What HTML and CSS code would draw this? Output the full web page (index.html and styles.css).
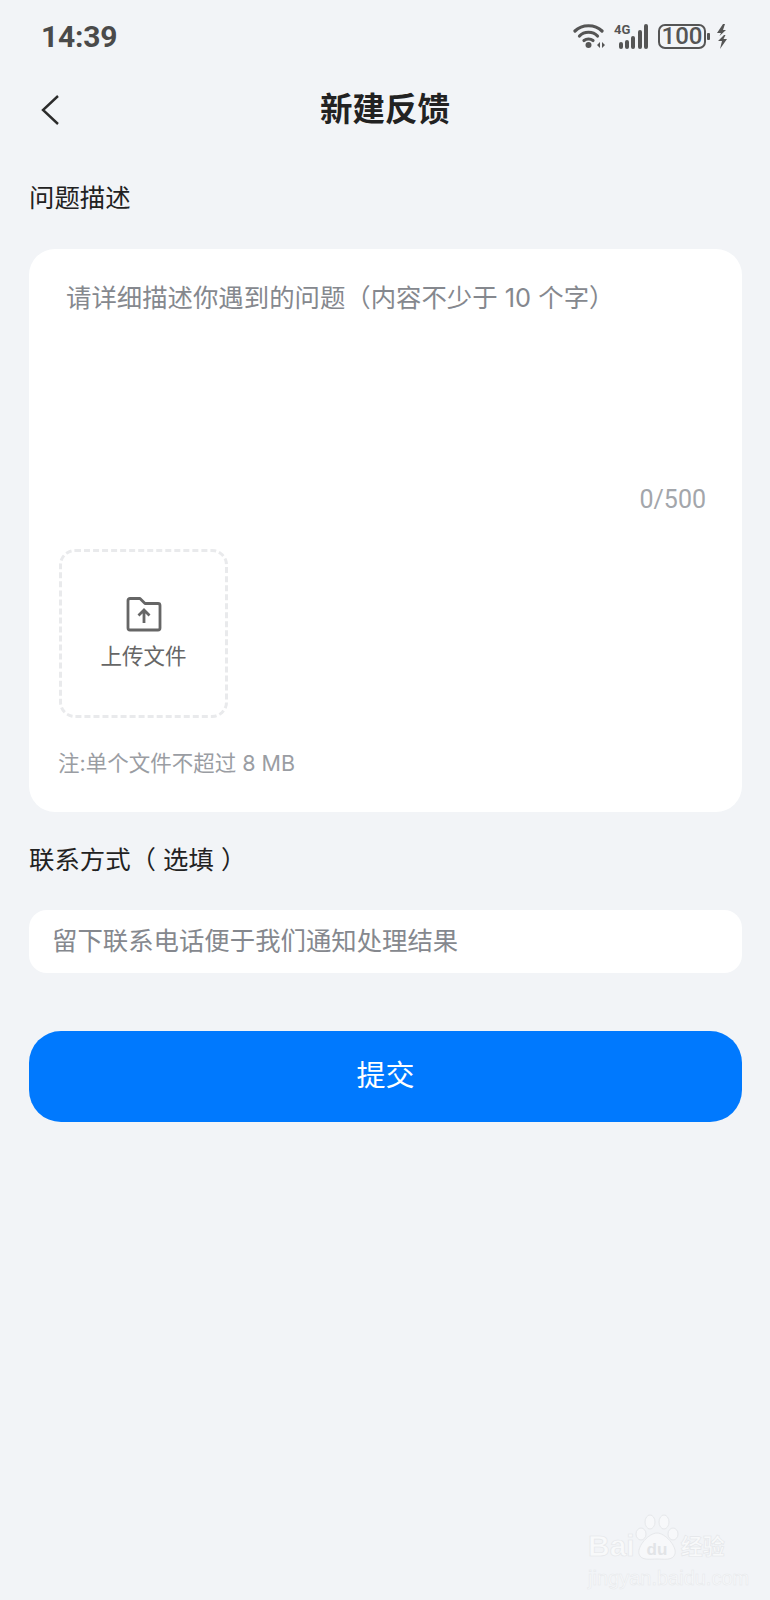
FILE: index.html
```html
<!DOCTYPE html>
<html lang="zh-CN">
<head>
  <meta charset="utf-8">
  <title>新建反馈</title>
  <link rel="stylesheet" href="styles.css">
</head>
<body>
  <div class="status">
    <span class="time">14:39</span>
    <div class="status-icons">
      <svg width="32" height="24" viewBox="0 0 32 24">
        <g fill="none" stroke="#555" stroke-width="3.2" stroke-linecap="round">
          <path d="M2 7 C9 0 22 0 29 7"/>
          <path d="M6.5 12 C11 7 20 7 24.5 12"/>
          <path d="M11 16.5 C13.5 14.5 17.5 14.5 20 16.5"/>
        </g>
        <circle cx="15.5" cy="21" r="3" fill="#555"/>
        <path d="M24 21 l3 -3 v6 z M32 21 l-3 -3 v6 z" fill="#555"/>
      </svg>
      <div class="signal">
        <span class="net">4G</span>
        <svg width="35" height="25" viewBox="0 0 35 25">
          <g fill="#555">
            <rect x="5" y="18" width="4" height="7" rx="2"/>
            <rect x="11" y="16" width="4" height="9" rx="2"/>
            <rect x="17" y="12" width="4" height="13" rx="2"/>
            <rect x="24" y="6" width="4" height="19" rx="2"/>
            <rect x="30" y="0" width="4" height="25" rx="2"/>
          </g>
        </svg>
      </div>
      <div class="battery"><span class="level">100</span></div>
      <span class="battery-tip"></span>
      <svg class="bolt" width="11" height="25" viewBox="0 0 11 25">
        <path d="M6 0 L0 9 H4 L2.5 12 L9 6 H6 L8 0 Z M7 11 L1 17 H5 L3 25 L10 15 H6.5 L8.5 11 Z" fill="#555"/>
      </svg>
    </div>
  </div>

  <header class="nav">
    <svg class="back" width="20" height="32" viewBox="0 0 20 32">
      <path d="M18 2 L3 16 L18 30" fill="none" stroke="#2b2b2b" stroke-width="2.4"/>
    </svg>
    <h1 class="title">新建反馈</h1>
  </header>

  <main class="form">
    <div class="label label-first">问题描述</div>
    <section class="card">
      <div class="placeholder">请详细描述你遇到的问题（内容不少于 10 个字）</div>
      <div class="counter">0/500</div>
      <div class="upload">
        <svg width="36" height="35" viewBox="0 0 36 35">
          <path d="M2 3.5 a2 2 0 0 1 2 -2 H14 L19 6.5 H32 a2 2 0 0 1 2 2 V31 a2 2 0 0 1 -2 2 H4 a2 2 0 0 1 -2 -2 Z" fill="none" stroke="#666" stroke-width="2.8" stroke-linejoin="round"/>
          <path d="M18 26 V13 M12.5 18.5 L18 13 L23.5 18.5" fill="none" stroke="#666" stroke-width="2.8"/>
        </svg>
        <span class="upload-text">上传文件</span>
      </div>
      <div class="note">注:单个文件不超过 8 MB</div>
    </section>

    <div class="label label-second">联系方式（ 选填 ）</div>
    <div class="input">留下联系电话便于我们通知处理结果</div>
    <button class="submit" type="button">提交</button>
  </main>

  <div class="watermark">
    <div class="wm-logo">
      <span>Bai</span>
      <svg width="44" height="48" viewBox="0 0 44 48">
        <g fill="#f7f8fa" stroke="#e6e8eb" stroke-width="1">
          <ellipse cx="6" cy="20" rx="5" ry="6"/>
          <ellipse cx="15" cy="8" rx="5" ry="7"/>
          <ellipse cx="29" cy="8" rx="5" ry="7"/>
          <ellipse cx="38" cy="20" rx="5" ry="6"/>
          <path d="M22 19 C30 19 42 32 40 40 C38 47 28 45 22 45 C16 45 6 47 4 40 C2 32 14 19 22 19 Z"/>
        </g>
        <text class="wm-du" x="22" y="41" text-anchor="middle">du</text>
      </svg>
      <span class="wm-cn">经验</span>
    </div>
    <div class="wm-url">jingyan.baidu.com</div>
  </div>
</body>
</html>
```

FILE: styles.css
```css
* { box-sizing: border-box; }

body {
  margin: 0;
  height: 1600px;
  overflow: hidden;
  position: relative;
  background: #f2f4f7;
  font-family: "Inter", "Noto Sans CJK SC", sans-serif;
  color: #222;
}

.status {
  height: 72px;
  padding: 0 42px 0 41px;
  display: flex;
  align-items: center;
  justify-content: space-between;
}

.time { font-family: "Roboto", sans-serif; font-size: 30px; font-weight: 700; color: #4a4a4a; letter-spacing: -.2px; }

.status-icons { display: flex; align-items: center; }

.signal { position: relative; width: 35px; height: 25px; margin-left: 9px; }
.net { position: absolute; left: 0; top: -1px; font: 700 13px "Roboto", sans-serif; color: #555; line-height: 13px; }
.signal svg { display: block; }

.battery {
  width: 48px;
  height: 25px;
  margin-left: 9px;
  border: 2.5px solid #555;
  border-radius: 7px;
  display: flex;
  align-items: center;
  justify-content: center;
}
.level { font: 500 24px "Roboto", sans-serif; color: #555; line-height: 20px; }
.battery-tip { width: 3px; height: 7px; margin-left: 1px; background: #555; border-radius: 1px; }
.bolt { margin-left: 7px; }

.nav {
  height: 72px;
  position: relative;
  display: flex;
  align-items: center;
  justify-content: center;
}
.back { position: absolute; left: 40px; top: 22px; }
.title { margin: 0 0 3px; font-size: 32.5px; font-weight: 700; color: #222; }

.form { padding: 0 28px 0 29px; }

.label { font-size: 25.4px; line-height: 36px; color: #222; }
.label-first { margin-top: 36px; }
.label-second { margin-top: 30px; }

.card {
  margin-top: 33px;
  height: 563px;
  padding: 31px 36px 0 30px;
  background: #fff;
  border-radius: 26px;
}

.placeholder { margin-left: 7px; font-size: 25.4px; line-height: 36px; color: #85888e; }

.counter { margin-top: 166px; text-align: right; font-family: "Roboto", sans-serif; font-size: 25px; line-height: 36px; color: #a3a6ab; }

.upload {
  width: 169px;
  height: 169px;
  margin-top: 31px;
  border: 3px dashed #e9eaec;
  border-radius: 16px;
  display: flex;
  flex-direction: column;
  align-items: center;
  padding-top: 45px;
}
.upload svg { display: block; }
.upload-text { margin-top: 8px; font-size: 21.5px; line-height: 32px; color: #666; }

.note { margin-top: 29px; margin-left: -1px; font-size: 21.5px; line-height: 32px; color: #9a9da3; }

.input {
  margin-top: 32px;
  height: 63px;
  padding: 0 23px;
  background: #fff;
  border-radius: 18px;
  font-size: 25.4px;
  line-height: 62px;
  color: #85888e;
}

.submit {
  display: block;
  width: 100%;
  height: 91px;
  margin-top: 58px;
  padding: 0 0 7px;
  border: 0;
  border-radius: 32px;
  background: #0079fe;
  color: #fff;
  font-family: inherit;
  font-size: 29px;
}

.watermark { position: absolute; right: 42px; top: 1514px; width: 140px; color: #f8f9fa; }
.wm-logo { display: flex; align-items: flex-end; height: 48px; font: 700 30px "Liberation Sans", "Noto Sans CJK SC", sans-serif; line-height: 32px; -webkit-text-stroke: .6px #e4e6e9; }
.wm-du { font-size: 17px; font-weight: 700; fill: #e2e4e7; -webkit-text-stroke: 0; }
.wm-cn { margin-left: 2px; font-size: 22px; line-height: 30px; white-space: nowrap; }
.wm-url { margin-top: 4px; font: 400 20px "Liberation Sans", sans-serif; line-height: 24px; white-space: nowrap; -webkit-text-stroke: .5px #e6e8eb; }
```
